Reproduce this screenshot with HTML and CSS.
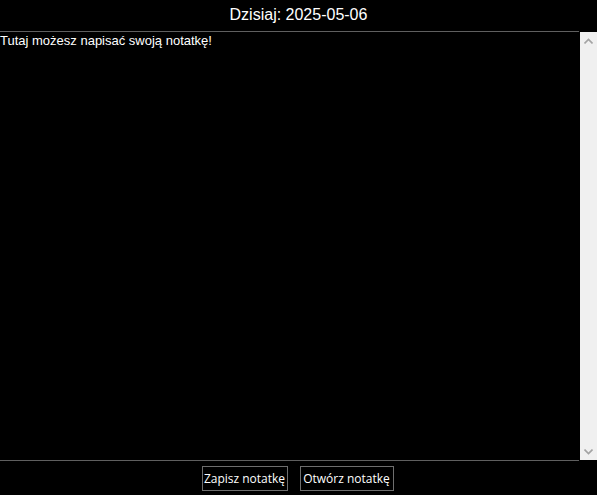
FILE: index.html
```html
<!DOCTYPE html>
<html lang="pl">
<head>
<meta charset="utf-8">
<title>Notatka</title>
<link rel="stylesheet" href="styles.css">
</head>
<body>
<div class="app">
  <header class="title">Dzisiaj: 2025-05-06</header>
  <div class="editor">
    <div class="text">Tutaj możesz napisać swoją notatkę!</div>
    <div class="scrollbar">
      <svg class="arrow" width="9" height="6" viewBox="0 0 9 6"><path d="M0.5 5.5 L4.5 1.5 L8.5 5.5" fill="none" stroke="#a3a3a3" stroke-width="1.6"/></svg>
      <svg class="arrow" width="9" height="6" viewBox="0 0 9 6"><path d="M0.5 0.5 L4.5 4.5 L8.5 0.5" fill="none" stroke="#a3a3a3" stroke-width="1.6"/></svg>
    </div>
  </div>
  <div class="buttons">
    <button class="btn btn-save">Zapisz notatkę</button>
    <button class="btn btn-open">Otwórz notatkę</button>
  </div>
</div>
</body>
</html>
```
FILE: styles.css
```css
html, body {
  margin: 0;
  padding: 0;
  background: #000;
}
.app {
  width: 597px;
  height: 495px;
  display: flex;
  flex-direction: column;
  background: #000;
}
.title {
  height: 31px;
  line-height: 30px;
  text-align: center;
  color: #fff;
  font-family: "Liberation Sans", Arial, sans-serif;
  font-size: 16px;
}
.editor {
  height: 430px;
  display: flex;
  flex-direction: row;
}
.text {
  flex: 1;
  border-top: 1px solid #5f5f5f;
  border-bottom: 1px solid #5f5f5f;
  margin-right: 1px;
  color: #fff;
  font-family: "Liberation Sans", Arial, sans-serif;
  font-size: 13px;
  line-height: 16px;
  padding-top: 1px;
}
.scrollbar {
  width: 17px;
  margin: 1px 0;
  background: #f0f0f0;
  display: flex;
  flex-direction: column;
  justify-content: space-between;
  align-items: center;
  padding: 6px 0 5px;
  box-sizing: border-box;
}
.arrow {
  display: block;
}
.buttons {
  flex: 1;
  display: flex;
  justify-content: center;
  align-items: flex-start;
  gap: 12px;
  padding-top: 5px;
  padding-right: 2px;
}
.btn {
  height: 25px;
  background: #000;
  color: #fff;
  border: 1px solid #6e6e6e;
  font-family: "Open Sans", "Noto Sans", sans-serif;
  font-size: 12px;
  padding: 0;
  margin: 0;
}
.btn-save {
  width: 86px;
}
.btn-open {
  width: 94px;
}
```
